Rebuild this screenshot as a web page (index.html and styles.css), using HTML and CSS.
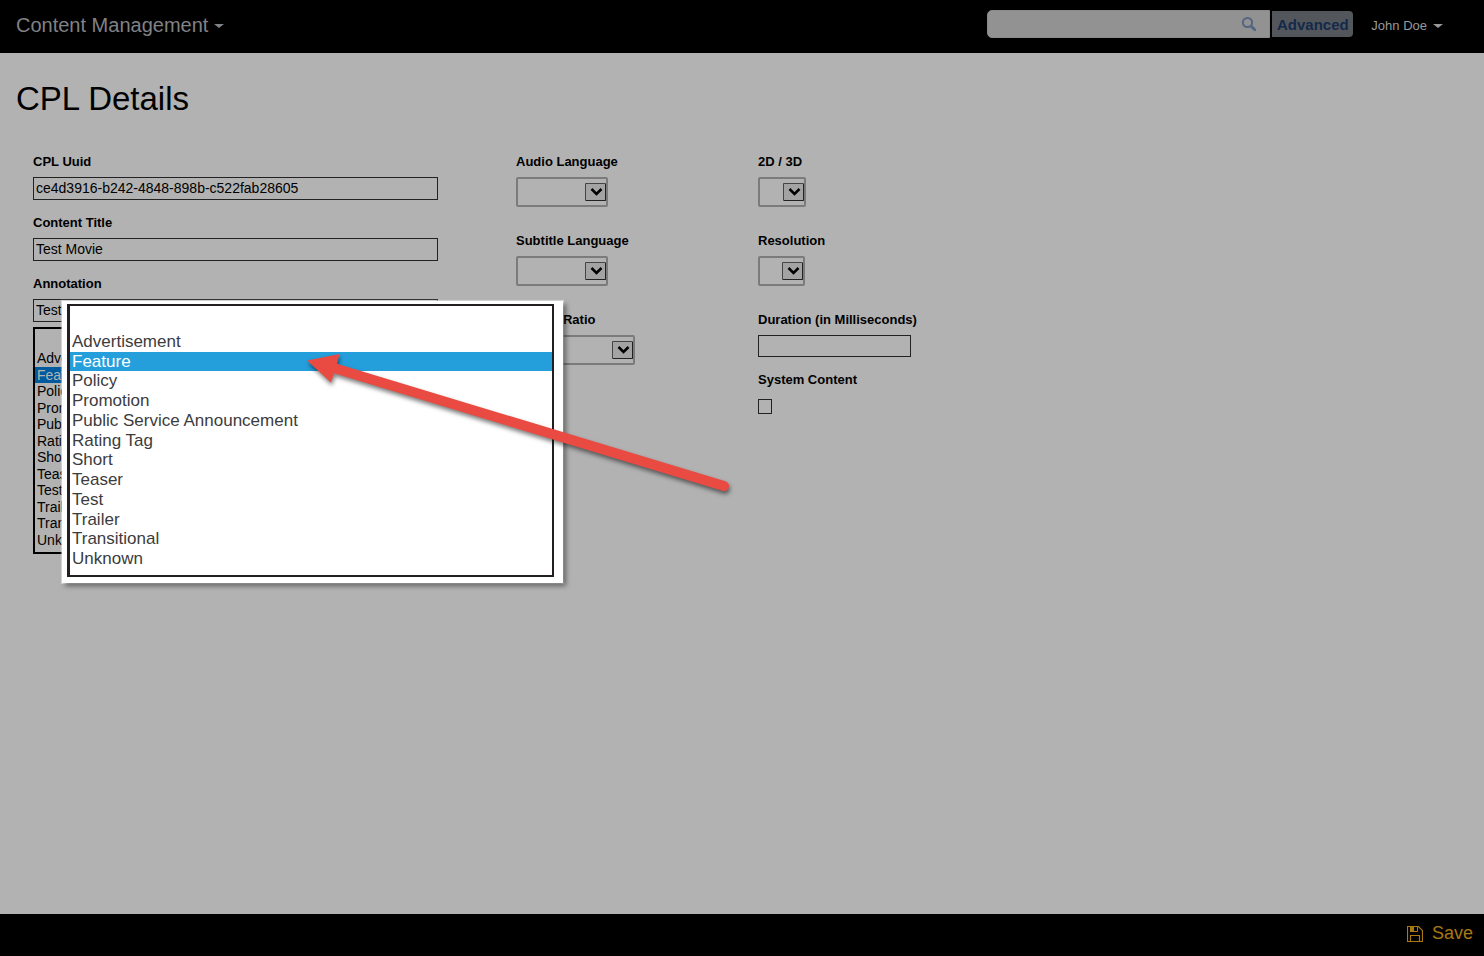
FILE: index.html
```html
<!DOCTYPE html>
<html lang="en">
<head>
<meta charset="utf-8">
<title>CPL Details</title>
<link rel="stylesheet" href="styles.css">
</head>
<body>
<header class="topbar">
  <button class="menu menu-title" type="button">Content Management <span class="caret"></span></button>
  <form class="search">
    <div class="search-box">
      <input class="search-input" type="search" aria-label="Search">
      <svg class="search-icon" viewBox="0 0 16 16" aria-hidden="true"><circle cx="6.500" cy="6.500" r="4.600" fill="none" stroke="currentColor" stroke-width="2"/><path d="M10.200 10.200L13.800 13.800" stroke="currentColor" stroke-width="2.800" stroke-linecap="round"/></svg>
    </div>
    <button class="advanced" type="button">Advanced</button>
  </form>
  <button class="menu menu-user" type="button">John Doe <span class="caret"></span></button>
</header>

<main class="page">
  <h1 class="page-title">CPL Details</h1>
  <form class="details">
    <div class="column">
      <div class="field text-field">
        <label class="label" for="uuid">CPL Uuid</label>
        <input class="text" id="uuid" type="text" value="ce4d3916-b242-4848-898b-c522fab28605">
      </div>
      <div class="field text-field">
        <label class="label" for="title">Content Title</label>
        <input class="text" id="title" type="text" value="Test Movie">
      </div>
      <div class="field">
        <label class="label" for="annotation">Annotation</label>
        <input class="text" id="annotation" type="text" value="Test Movie">
      </div>
      <div class="kind">
        <select class="list list-kind" size="13" aria-label="Content kind">
          <option></option>
          <option>Advertisement</option>
          <option selected>Feature</option>
          <option>Policy</option>
          <option>Promotion</option>
          <option>Public Service Announcement</option>
          <option>Rating Tag</option>
          <option>Short</option>
          <option>Teaser</option>
          <option>Test</option>
          <option>Trailer</option>
          <option>Transitional</option>
          <option>Unknown</option>
        </select>
        <div class="callout">
          <select class="list list-large" size="13" aria-label="Content kind, enlarged">
            <option></option>
            <option>Advertisement</option>
            <option selected>Feature</option>
            <option>Policy</option>
            <option>Promotion</option>
            <option>Public Service Announcement</option>
            <option>Rating Tag</option>
            <option>Short</option>
            <option>Teaser</option>
            <option>Test</option>
            <option>Trailer</option>
            <option>Transitional</option>
            <option>Unknown</option>
          </select>
          <svg class="arrow" viewBox="0 0 440 150" aria-hidden="true"><path d="M7 10.500L39.500 4L37 13.800L425.500 131.200A5 5 0 0 1 422.500 140.800L34 23.300L31 32.500z" fill="#e94b43"/></svg>
        </div>
      </div>
    </div>

    <div class="column">
      <div class="field select-field">
        <label class="label" for="audio">Audio Language</label>
        <select class="drop drop-medium" id="audio"><option></option></select>
      </div>
      <div class="field select-field">
        <label class="label" for="subtitle">Subtitle Language</label>
        <select class="drop drop-medium" id="subtitle"><option></option></select>
      </div>
      <div class="field select-field">
        <label class="label" for="aspect">Aspect Ratio</label>
        <select class="drop drop-wide" id="aspect"><option></option></select>
      </div>
    </div>

    <div class="column">
      <div class="field select-field">
        <label class="label" for="dimension">2D / 3D</label>
        <select class="drop drop-small" id="dimension"><option></option></select>
      </div>
      <div class="field select-field">
        <label class="label" for="resolution">Resolution</label>
        <select class="drop drop-tiny" id="resolution"><option></option></select>
      </div>
      <div class="field text-field">
        <label class="label" for="duration">Duration (in Milliseconds)</label>
        <input class="text text-short" id="duration" type="text">
      </div>
      <div class="field check-field">
        <label class="label" for="system">System Content</label>
        <input class="check" id="system" type="checkbox">
      </div>
    </div>
  </form>
</main>

<footer class="footer">
  <button class="save" type="button">
    <svg class="save-icon" viewBox="0 0 16 16" aria-hidden="true"><path d="M.500 .500H11.500L15.500 4.500V15.500H.500z" fill="none" stroke="currentColor" stroke-width="1.200"/><path d="M3 1H7V6H3z" fill="currentColor"/><path d="M7 5.500H10.500V1" fill="none" stroke="currentColor"/><path d="M3.500 15V9.500H12.500V15" fill="none" stroke="currentColor" stroke-width="1.200"/></svg>
    Save
  </button>
</footer>
</body>
</html>
```
FILE: styles.css
```css
* {
  box-sizing: border-box;
}

body {
  margin: 0;
  min-height: 100vh;
  display: flex;
  flex-direction: column;
  background: #b2b2b2;
  color: #000;
  font-family: "Liberation Sans", Arial, sans-serif;
  font-size: 14px;
}

button,
input,
select {
  margin: 0;
  font-family: inherit;
}

button {
  border: 0;
  padding: 0;
  background: none;
}

.topbar {
  display: flex;
  align-items: center;
  height: 53px;
  padding: 0 41px 5px 16px;
  background: #000;
}

.menu {
  display: flex;
  align-items: center;
  gap: 6px;
  padding-top: 3px;
}

.menu-title {
  margin-right: auto;
  color: #808285;
  font-size: 20px;
}

.menu-user {
  margin-left: 18px;
  color: #999;
  font-size: 13px;
}

.caret {
  border: 5px solid transparent;
  border-top: 4px solid currentColor;
  border-bottom: 0;
}

.search {
  display: flex;
  align-items: center;
  gap: 2px;
}

.search-box {
  position: relative;
}

.search-input {
  display: block;
  width: 283px;
  height: 28px;
  padding: 0 36px 0 8px;
  border: 1px solid #8a8a8a;
  border-radius: 5px 0 0 5px;
  background: #929292;
  appearance: none;
}

.search-icon {
  position: absolute;
  top: 6px;
  right: 13px;
  width: 16px;
  height: 16px;
  color: #536581;
}

.advanced {
  width: 81px;
  height: 26px;
  border-radius: 0 4px 4px 0;
  background: #53575c;
  color: #13294a;
  font-size: 15px;
  font-weight: bold;
}

.page {
  flex: 1;
  padding: 26px 16px 16px;
}

.page-title {
  margin: 0 0 35px;
  font-size: 33px;
  font-weight: normal;
  line-height: 40px;
}

.details {
  display: grid;
  grid-template-columns: 483px 242px 1fr;
  padding-left: 17px;
}

.field {
  display: flex;
  flex-direction: column;
  align-items: flex-start;
  gap: 7px;
}

.text-field {
  margin-bottom: 15px;
}

.select-field {
  margin-bottom: 26px;
}

.check-field {
  gap: 11px;
}

.label {
  font-size: 13px;
  font-weight: bold;
  line-height: 16px;
}

.text {
  width: 405px;
  height: 23px;
  padding: 0 2px 1px;
  border: 1px solid #222;
  background: transparent;
  color: #000;
  font-size: 14px;
}

.text-short {
  width: 153px;
  height: 22px;
}

.drop {
  height: 30px;
  border: 2px solid #7b7b7b;
  border-radius: 2px;
  background: url("data:image/svg+xml,%3Csvg xmlns='http://www.w3.org/2000/svg' width='21' height='18'%3E%3Cpath d='M.5 .5H20.500V17.500H.5z' fill='%23a3a3a3' stroke='%23444'/%3E%3Cpath d='M20.500 1V17.500H1' fill='none' stroke='%23222'/%3E%3Cpath d='M6.500 6L11.500 11L16.500 6' fill='none' stroke='%23000' stroke-width='2.500'/%3E%3C/svg%3E") right center no-repeat;
  appearance: none;
}

.drop-tiny {
  width: 47px;
}

.drop-small {
  width: 48px;
}

.drop-medium {
  width: 92px;
}

.drop-wide {
  width: 119px;
}

.check {
  width: 14px;
  height: 15px;
  border: 1px solid #222;
  background: transparent;
  appearance: none;
}

.kind {
  position: relative;
  width: 405px;
  margin-top: 5px;
}

.list {
  display: block;
  width: 100%;
  border-radius: 0;
  overflow: hidden;
}

.list option {
  min-height: 0;
  padding: 0 2px;
}

.list-kind {
  height: 227px;
  padding: 5px 0;
  border: 2px solid #000;
  background: transparent;
  color: #000;
  font-size: 14px;
}

.list-kind option {
  height: 16px;
  line-height: 16px;
}

.list-kind option:nth-child(even) {
  height: 17px;
}

.list-kind option:checked {
  background: linear-gradient(#005a9e, #005a9e);
  -webkit-text-fill-color: #b2b2b2;
}

.callout {
  position: absolute;
  top: -26px;
  left: 29px;
  width: 501px;
  padding: 3px 9px 6px 5px;
  background: #fff;
  box-shadow: 3px 3px 5px rgba(0, 0, 0, 0.45), 0 0 1px 1px rgba(255, 255, 255, 0.5);
}

.list-large {
  height: 273px;
  padding: 6px 0 5px;
  border: 2px solid #231f20;
  border-left-width: 3px;
  background: #fff;
  color: #3c3c3c;
  font-size: 17px;
}

.list-large option {
  height: 20px;
  line-height: 20px;
}

.list-large option:nth-child(4n + 3) {
  height: 19px;
}

.list-large option:checked {
  background: linear-gradient(#259fdb, #259fdb);
  -webkit-text-fill-color: #fff;
}

.arrow {
  position: absolute;
  top: 49px;
  left: 238px;
  width: 440px;
  height: 150px;
  overflow: visible;
  pointer-events: none;
  filter: drop-shadow(1px 3px 2px rgba(0, 0, 0, 0.5));
}

.footer {
  display: flex;
  justify-content: flex-end;
  align-items: center;
  height: 42px;
  padding: 0 11px 3px;
  background: #000;
}

.save {
  display: flex;
  align-items: center;
  gap: 9px;
  color: #a87814;
  font-size: 18px;
}

.save-icon {
  width: 16px;
  height: 16px;
}
```
